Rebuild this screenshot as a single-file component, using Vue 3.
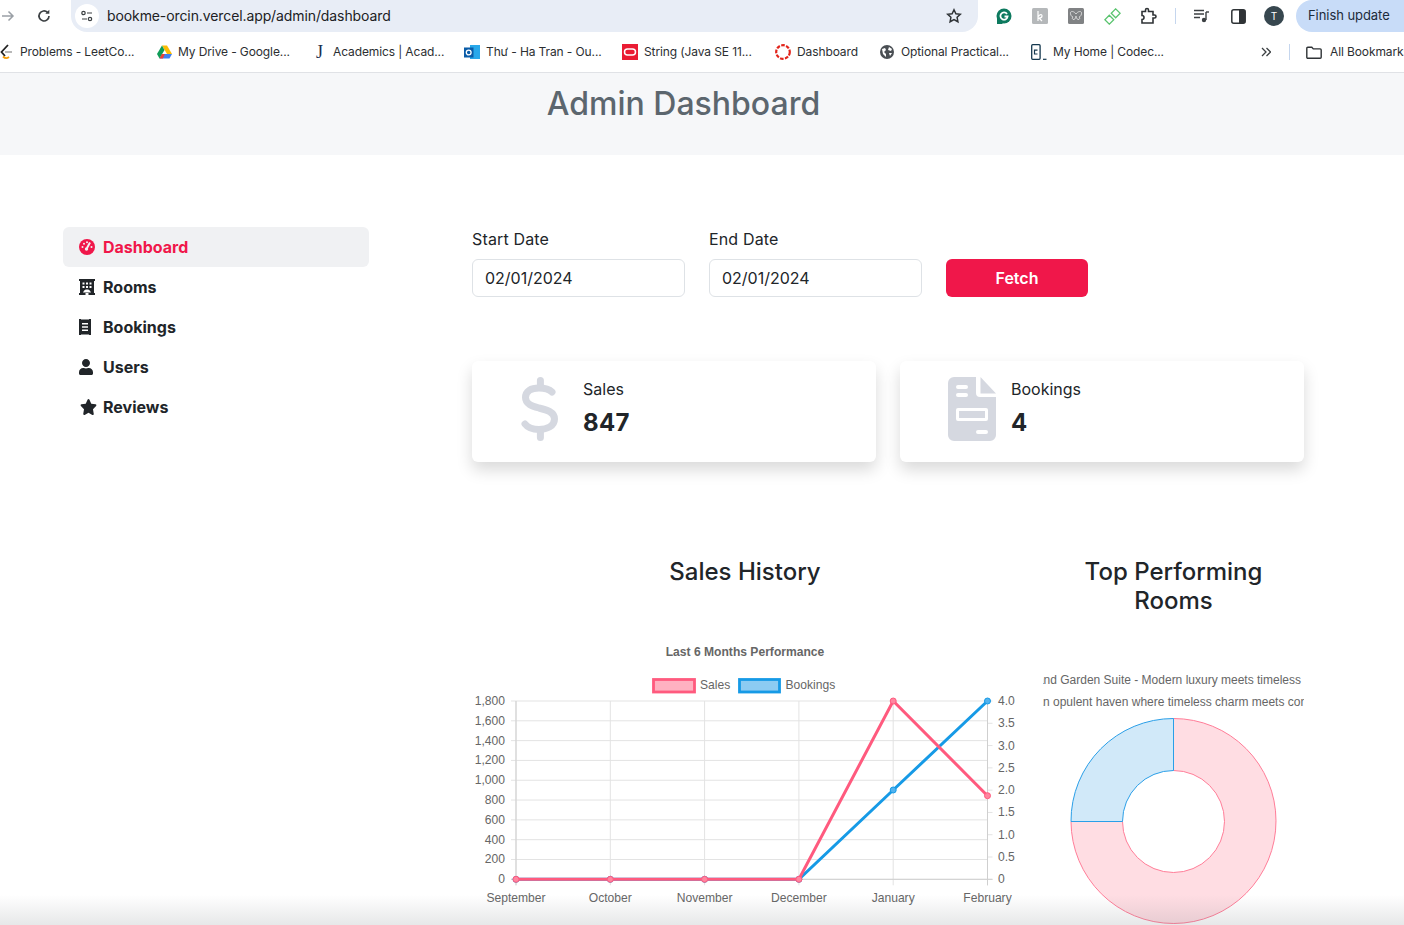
<script setup>
const bookmarks = [
  { k: 'leet', t: 'Problems - LeetCo...', w: 157, iw: 20 },
  { k: 'drive', t: 'My Drive - Google...', w: 158, iw: 21 },
  { k: 'j', t: 'Academics | Acad...', w: 149, iw: 18 },
  { k: 'outlook', t: 'Thư - Ha Tran - Ou...', w: 158, iw: 22 },
  { k: 'oracle', t: 'String (Java SE 11...', w: 153, iw: 22 },
  { k: 'dash', t: 'Dashboard', w: 105, iw: 22 },
  { k: 'globe', t: 'Optional Practical...', w: 151, iw: 21 },
  { k: 'codec', t: 'My Home | Codec...', w: 229, iw: 22 }
]
const nav = [
  { k: 'gauge', t: 'Dashboard', active: true },
  { k: 'hotel', t: 'Rooms' },
  { k: 'receipt', t: 'Bookings' },
  { k: 'user', t: 'Users' },
  { k: 'star', t: 'Reviews' }
]
const top = 701, bot = 879.3, left = 516, right = 987.5
const xs = [0, 1, 2, 3, 4, 5].map(i => left + (i * (right - left)) / 5)
const months = ['September', 'October', 'November', 'December', 'January', 'February']
const lTicks = ['1,800', '1,600', '1,400', '1,200', '1,000', '800', '600', '400', '200', '0'].map((t, i) => ({ t, y: top + (i * (bot - top)) / 9 }))
const rTicks = ['4.0', '3.5', '3.0', '2.5', '2.0', '1.5', '1.0', '0.5', '0'].map((t, i) => ({ t, y: top + (i * (bot - top)) / 8 }))
const sales = [bot, bot, bot, bot, top, 795.7]
const bookingsY = [bot, bot, bot, bot, 790, top]
const pts = a => a.map((y, i) => `${xs[i]},${y}`).join(' ')
const dots = a => a.map((y, i) => ({ x: xs[i], y }))
</script>

<template>
  <div class="page">
    <div class="toolbar">
      <svg class="tb-back" width="14" height="14" viewBox="0 0 14 14"><path d="M1 7h11M7.500 2.500 12 7l-4.500 4.500" fill="none" stroke="#9aa0a6" stroke-width="1.500"/></svg>
      <svg class="tb-reload" width="16" height="16" viewBox="0 0 16 16"><path d="M13 8a5 5 0 1 1-1.500-3.600" fill="none" stroke="#3c4043" stroke-width="1.700"/><path d="M13.300 1.800v4h-4z" fill="#3c4043"/></svg>
      <div class="omni">
        <span class="tune">
          <svg width="14" height="14" viewBox="0 0 14 14"><circle cx="3.500" cy="4" r="1.700" fill="none" stroke="#3c4043" stroke-width="1.200"/><path d="M7 4h5M2 10h5" stroke="#3c4043" stroke-width="1.200"/><circle cx="10" cy="10" r="1.700" fill="none" stroke="#3c4043" stroke-width="1.200"/></svg>
        </span>
        <span class="url">bookme-orcin.vercel.app/admin/dashboard</span>
        <svg class="omni-star" width="16" height="16" viewBox="0 0 16 16"><path d="m8 1.800 1.900 4 4.400.5-3.200 3 .8 4.400L8 11.500l-3.900 2.200.8-4.400-3.200-3 4.400-.5z" fill="none" stroke="#2f3336" stroke-width="1.500"/></svg>
      </div>
      <div class="ext-row">
        <span class="ext"><svg width="16" height="16" viewBox="0 0 16 16"><circle cx="8" cy="8" r="7.500" fill="#0d7a5f"/><path d="M1 10v6h6z" fill="#0d7a5f"/><path d="M11 6a3.600 3.600 0 1 0 .6 2.500H8.500" fill="none" stroke="#fff" stroke-width="1.800"/></svg></span>
        <span class="ext"><svg width="16" height="16" viewBox="0 0 16 16"><rect width="16" height="16" rx="1.500" fill="#b5b8ba"/><path d="M6 3v10M6 9c2-3 4-3 4-1s-2 2-3 2l3 3" fill="none" stroke="#fff" stroke-width="1.200"/></svg></span>
        <span class="ext"><svg width="16" height="16" viewBox="0 0 16 16"><rect width="16" height="16" rx="1.500" fill="#808284"/><path d="M8 6C6 3 3 3 2.500 4.500S3.500 9 5 9c-1.500 1-.5 3 1 2.500S8 9 8 8c0 1 .5 3 2 3.500s2.500-1.500 1-2.500c1.500 0 3-3 2.500-4.500S10 3 8 6z" fill="none" stroke="#ddd" stroke-width=".9"/></svg></span>
        <span class="ext"><svg width="17" height="17" viewBox="0 0 16 16"><path d="M11 .8 15.200 5 11 9.200 6.800 5zM5 6.800 9.200 11 5 15.200.8 11z" fill="none" stroke="#5ac46f" stroke-width="1.200"/></svg></span>
        <span class="ext"><svg width="18" height="18" viewBox="0 0 18 18"><path d="M3 4.500h3.500V3a1.500 1.500 0 0 1 3 0v1.500H14V8h1.500a1.500 1.500 0 0 1 0 3H14v5H3v-3.500a2 2 0 0 0 0-4z" fill="none" stroke="#2f3336" stroke-width="1.600"/></svg></span>
        <span class="tb-div"></span>
        <span class="ext"><svg width="16" height="14" viewBox="0 0 16 14"><path d="M0 1.500h10M0 5h10M0 8.500h6" stroke="#3c4043" stroke-width="1.400"/><path d="M12 3v8" stroke="#3c4043" stroke-width="1.400"/><circle cx="10" cy="11" r="2.200" fill="#3c4043"/><path d="M12 3h3" stroke="#3c4043" stroke-width="1.400"/></svg></span>
        <span class="ext"><svg width="15" height="15" viewBox="0 0 15 15"><rect x=".8" y=".8" width="13.400" height="13.400" rx="2" fill="none" stroke="#2f3336" stroke-width="1.500"/><rect x="8" y="1" width="6" height="13" fill="#2f3336"/></svg></span>
        <span class="avatar">T</span>
      </div>
      <div class="finish">Finish update</div>
    </div>

    <div class="bookbar">
      <div v-for="b in bookmarks" :key="b.k" class="bm" :style="{ width: b.w + 'px' }">
        <span class="bm-ico" :style="{ width: b.iw + 'px' }">
          <svg v-if="b.k === 'leet'" width="14" height="16" viewBox="0 0 14 16"><path d="M8 1 1.500 8l3.500 4" fill="none" stroke="#222" stroke-width="1.800"/><path d="M3 12.500c2 2 4 2 6 .5" fill="none" stroke="#f59e0b" stroke-width="1.800"/><path d="M5 8h7" stroke="#9a9a9a" stroke-width="1.400"/></svg>
          <svg v-else-if="b.k === 'drive'" width="15" height="14" viewBox="0 0 15 14"><path d="M5 .5h5L15 9h-5z" fill="#fbbc04"/><path d="M4.900 9H15l-2.500 4.500h-10z" fill="#3f80ef"/><path d="M5 .5 7.500 5l-5 8.500L0 9z" fill="#0f9d58"/><path d="M2.500 13.500 4.900 9h3l-2 4.500z" fill="#ea4335"/></svg>
          <span v-else-if="b.k === 'j'" class="j-ico">J</span>
          <svg v-else-if="b.k === 'outlook'" width="16" height="16" viewBox="0 0 16 16"><rect x="6" y="1" width="10" height="14" fill="#28a8ea"/><rect x="0" y="3.500" width="9.500" height="10" fill="#0a5ca8"/><circle cx="4.700" cy="8.500" r="2.400" fill="none" stroke="#fff" stroke-width="1.300"/></svg>
          <svg v-else-if="b.k === 'oracle'" width="16" height="16" viewBox="0 0 16 16"><rect width="16" height="16" fill="#ea1b33"/><rect x="2.500" y="5" width="11" height="6" rx="3" fill="none" stroke="#fff" stroke-width="1.500"/></svg>
          <svg v-else-if="b.k === 'dash'" width="16" height="16" viewBox="0 0 16 16"><circle cx="8" cy="8" r="6.800" fill="none" stroke="#e2231a" stroke-width="2.200" stroke-dasharray="3.600 1.400"/></svg>
          <svg v-else-if="b.k === 'globe'" width="14" height="14" viewBox="0 0 14 14"><circle cx="7" cy="7" r="7" fill="#4a4f54"/><path d="M2 4l3-1 1 2-2 2 2 2v3L3 9zM9 2l3 2-1 2-3-1zM9 8h3l-2 3z" fill="#fff"/></svg>
          <svg v-else width="16" height="16" viewBox="0 0 16 16"><rect x=".7" y=".7" width="8.400" height="14.600" rx="1" fill="none" stroke="#15384f" stroke-width="1.300"/><path d="M6.500 6.200H3.500V10h3" fill="none" stroke="#15384f" stroke-width="1.200"/><path d="M12 15.300h3.500" stroke="#15384f" stroke-width="1.200"/></svg>
        </span>
        <span class="bm-t">{{ b.t }}</span>
      </div>
      <svg class="chev" width="10" height="10" viewBox="0 0 10 10"><path d="M1 1l4 4-4 4M5.500 1l4 4-4 4" fill="none" stroke="#3c4043" stroke-width="1.300"/></svg>
      <span class="bm-div"></span>
      <svg class="folder" width="16" height="13" viewBox="0 0 16 13"><path d="M.8 2.200a1 1 0 0 1 1-1h4l1.500 1.700h6.900a1 1 0 0 1 1 1v7.400a1 1 0 0 1-1 1H1.800a1 1 0 0 1-1-1z" fill="none" stroke="#2f3336" stroke-width="1.400"/></svg>
      <span class="bm-t">All Bookmarks</span>
    </div>

    <header class="hero"><h1>Admin Dashboard</h1></header>

    <main class="main">
      <aside class="side">
        <a v-for="n in nav" :key="n.k" class="nav" :class="{ on: n.active }">
          <span class="ni">
            <svg v-if="n.k === 'gauge'" width="16" height="16" viewBox="0 0 16 16"><circle cx="8" cy="8" r="8" fill="currentColor"/><path d="M11 3.500 8 9" stroke="#f0f1f3" stroke-width="2"/><circle cx="7.500" cy="10" r="1.700" fill="#f0f1f3"/><g fill="#f0f1f3"><circle cx="3.500" cy="8" r="1"/><circle cx="5" cy="4.800" r="1"/><circle cx="8" cy="3.200" r="1"/><circle cx="12.500" cy="8" r="1"/></g></svg>
            <svg v-else-if="n.k === 'hotel'" width="16" height="16" viewBox="0 0 16 16"><path fill-rule="evenodd" fill="currentColor" d="M0 0h16v2h-1v12h1v2H9.500v-3h-3v3H0v-2h1V2H0zM3.500 3.500v2h2v-2zm3.500 0v2h2v-2zm3.500 0v2h2v-2zM3.500 7v2h2V7zM7 7v2h2V7zm3.500 0v2h2V7zM4 13.500h8C11 11 9.500 10.500 8 10.500s-3 .5-4 3z"/></svg>
            <svg v-else-if="n.k === 'receipt'" width="12" height="16" viewBox="0 0 12 16"><path fill-rule="evenodd" fill="currentColor" d="M0 0h2l1 1 1-1 1 1 1-1 1 1 1-1 1 1 1-1h2v16h-2l-1-1-1 1-1-1-1 1-1-1-1 1-1-1-1 1H0zM3 4v1.500h6V4zm0 3.300v1.500h6V7.300zm0 3.200V12h6v-1.500z"/></svg>
            <svg v-else-if="n.k === 'user'" width="14" height="16" viewBox="0 0 448 512"><path fill="currentColor" d="M224 256c70.700 0 128-57.300 128-128S294.700 0 224 0 96 57.300 96 128s57.300 128 128 128zm89.600 32h-16.700c-22.200 10.200-46.900 16-72.900 16s-50.600-5.800-72.900-16h-16.700C60.200 288 0 348.200 0 422.400V464c0 26.500 21.500 48 48 48h352c26.500 0 48-21.500 48-48v-41.600c0-74.200-60.200-134.400-134.400-134.400z"/></svg>
            <svg v-else class="star" width="17" height="16" viewBox="0 0 576 512" preserveAspectRatio="none"><path fill="currentColor" d="M259.300 17.800L194 150.200 47.900 171.500c-26.200 3.800-36.700 36.100-17.700 54.600l105.700 103-25 145.500c-4.500 26.300 23.200 46 46.400 33.700L288 439.600l130.700 68.700c23.200 12.200 50.900-7.400 46.400-33.700l-25-145.500 105.700-103c19-18.500 8.500-50.800-17.700-54.600L382 150.200 316.700 17.800c-11.700-23.600-45.600-23.900-57.400 0z"/></svg>
          </span>
          <span>{{ n.t }}</span>
        </a>
      </aside>

      <section class="content">
        <form class="dates">
          <label class="field"><span>Start Date</span><input value="02/01/2024" readonly /></label>
          <label class="field"><span>End Date</span><input value="02/01/2024" readonly /></label>
          <button type="button" class="fetch">Fetch</button>
        </form>

        <div class="cards">
          <div class="card">
            <svg class="card-ico dollar" width="38" height="64" viewBox="0 0 38 64"><path d="M20.400 3.500V9.500M20.400 54.500V60.500" fill="none" stroke="#d5d8e0" stroke-width="7" stroke-linecap="round"/><path d="M32 15C29 12 24 11 19 11 11 11 5.500 14 5.500 20.500 5.500 27 12 29 19 31 27 33 34.500 35 34.500 42 34.500 49 27 52.500 19 52.500 13 52.500 8 51 5 47" fill="none" stroke="#d5d8e0" stroke-width="7" stroke-linecap="round"/></svg>
            <div><div class="c-label">Sales</div><div class="c-val">847</div></div>
          </div>
          <div class="card">
            <svg class="card-ico" width="48" height="64" viewBox="0 0 48 64"><path fill-rule="evenodd" fill="#d5d8e0" d="M6 0h22v16a4 4 0 0 0 4 4h16v38a6 6 0 0 1-6 6H6a6 6 0 0 1-6-6V6a6 6 0 0 1 6-6zM10 8a2 2 0 0 0 0 4h8a2 2 0 0 0 0-4zm0 8a2 2 0 0 0 0 4h8a2 2 0 0 0 0-4zm-0 15a2 2 0 0 0-2 2v9a2 2 0 0 0 2 2h28a2 2 0 0 0 2-2v-9a2 2 0 0 0-2-2zm1 3h26v7H11zm19 19a2 2 0 0 0 0 4h8a2 2 0 0 0 0-4z"/><path fill="#d5d8e0" d="M32.500 0 48 16.500H32.500z"/></svg>
            <div><div class="c-label">Bookings</div><div class="c-val">4</div></div>
          </div>
        </div>

        <div class="charts">
          <div class="col-line">
            <h2>Sales History</h2>
            <svg class="line-svg" width="546" height="279" viewBox="472 646 546 279">
              <text x="745" y="655.500" class="ct-title" text-anchor="middle">Last 6 Months Performance</text>
              <rect x="653.500" y="679.500" width="41" height="12.500" fill="#ffb1c1" stroke="#ff5a7e" stroke-width="2.800"/>
              <text x="700" y="689" class="ct">Sales</text>
              <rect x="739.500" y="679.500" width="40" height="12.500" fill="#8ccbf2" stroke="#169ae6" stroke-width="2.800"/>
              <text x="785.500" y="689" class="ct">Bookings</text>
              <g stroke="#e3e3e3" stroke-width="1">
                <line v-for="t in lTicks" :key="t.t" :x1="left - 5" :x2="right" :y1="t.y" :y2="t.y"/>
                <line v-for="x in xs" :key="x" :x1="x" :x2="x" :y1="top" :y2="bot + 6"/>
                <line v-for="t in rTicks" :key="'r' + t.t" :x1="right" :x2="right + 5" :y1="t.y" :y2="t.y"/>
              </g>
              <line :x1="left" :x2="left" :y1="top" :y2="bot + 6" stroke="#cfcfcf"/>
              <line :x1="right" :x2="right" :y1="top" :y2="bot + 6" stroke="#cfcfcf"/>
              <line :x1="left - 5" :x2="right + 5" :y1="bot" :y2="bot" stroke="#cfcfcf"/>
              <text v-for="t in lTicks" :key="'l' + t.t" :x="505" :y="t.y + 4" class="ct" text-anchor="end">{{ t.t }}</text>
              <text v-for="t in rTicks" :key="'rt' + t.t" :x="998" :y="t.y + 4" class="ct">{{ t.t }}</text>
              <text v-for="(m, i) in months" :key="m" :x="xs[i]" y="902" class="ct" text-anchor="middle">{{ m }}</text>
              <polyline :points="pts(bookingsY)" fill="none" stroke="#169ae6" stroke-width="3"/>
              <circle v-for="(d, i) in dots(bookingsY)" :key="'b' + i" :cx="d.x" :cy="d.y" r="3" fill="#52b3ef" stroke="#169ae6"/>
              <polyline :points="pts(sales)" fill="none" stroke="#ff5a7e" stroke-width="3"/>
              <circle v-for="(d, i) in dots(sales)" :key="'s' + i" :cx="d.x" :cy="d.y" r="3" fill="#ff86a0" stroke="#ff5a7e"/>
            </svg>
          </div>
          <div class="col-donut">
            <h2>Top Performing Rooms</h2>
            <div class="leg leg-a"><span>Grand Garden Suite - Modern luxury meets timeless</span></div>
            <div class="leg leg-b"><span>An opulent haven where timeless charm meets contemporary</span></div>
            <svg class="donut" width="261" height="208" viewBox="1043 717 261 208">
              <path d="M1173.500 718.500A102.500 102.500 0 1 1 1071 821.500H1122.500A51 51 0 1 0 1173.500 770.500Z" fill="#ffdde3" stroke="#ff7d98" stroke-width="1"/>
              <path d="M1071 821.500A102.500 102.500 0 0 1 1173.500 718.500V770.500A51 51 0 0 0 1122.500 821.500Z" fill="#d1e9f9" stroke="#2a9fe8" stroke-width="1"/>
            </svg>
          </div>
        </div>
      </section>
    </main>
    <div class="fade"></div>
  </div>
</template>

<style>
html, body { margin: 0; background: #fff; overflow: hidden; }
</style>

<style scoped>
.page { position: relative; width: 1404px; height: 925px; overflow: hidden; font-family: Inter, "Liberation Sans", sans-serif; color: #212529; background: #fff; }
.toolbar { display: flex; align-items: center; height: 32px; white-space: nowrap; }
.tb-back { margin-left: 1px; flex: none; }
.tb-reload { margin-left: 21px; flex: none; }
.omni { display: flex; align-items: center; width: 907px; height: 32px; margin-left: 19px; border-radius: 0 0 16px 16px; background: #e8edf6; flex: none; }
.tune { display: flex; align-items: center; justify-content: center; width: 24px; height: 24px; margin-left: 4px; border-radius: 50%; background: #fff; }
.url { margin: 0 0 2px 8px; font-size: 14px; letter-spacing: -.1px; color: #202124; }
.omni-star { margin-left: auto; margin-right: 16px; }
.ext-row { display: flex; align-items: center; margin-left: 8px; flex: none; }
.ext { display: flex; align-items: center; justify-content: center; width: 36px; height: 32px; }
.tb-div { width: 1px; height: 16px; margin: 0 8px 0 9px; background: #c5d6ee; }
.avatar { display: flex; align-items: center; justify-content: center; width: 20px; height: 20px; margin-left: 8px; border-radius: 50%; background: #37474f; color: #fff; font-size: 10px; }
.finish { display: flex; align-items: center; height: 30px; width: 130px; margin-left: 12px; padding: 0 0 2px 12px; border-radius: 16px 0 0 16px; background: #c8dcf8; font-size: 13px; letter-spacing: -.06px; color: #1c2b3a; flex: none; }
.bookbar { display: flex; align-items: center; height: 40px; border-bottom: 1px solid #e0e2e6; box-sizing: content-box; white-space: nowrap; background: #fff; }
.bm { display: flex; align-items: center; flex: none; }
.bm-ico { display: flex; align-items: center; flex: none; }
.bm-t { margin-bottom: 2px; font-size: 12px; letter-spacing: -.11px; color: #2b2e31; }
.j-ico { margin-left: 1px; font-family: "Liberation Serif", serif; font-size: 18px; color: #1c2f4f; }
.chev { margin: 0 18px 0 1px; flex: none; }
.bm-div { width: 1px; height: 16px; margin-right: 16px; background: #c5d6ee; flex: none; }
.folder { margin-right: 8px; flex: none; }
.hero { height: 82px; background: #f6f7f9; }
h1 { margin: 0; padding: 12px 37px 0 0; text-align: center; font-size: 32px; line-height: 38px; font-weight: 500; color: #5c666e; }
.main { display: flex; padding: 72px 100px 0 63px; }
.side { display: flex; flex-direction: column; width: 306px; flex: none; }
.nav { display: flex; align-items: center; height: 40px; padding-left: 16px; border-radius: 6px; font-size: 16px; font-weight: 700; color: #212529; }
.nav.on { background: #f0f1f3; color: #f0174a; }
.ni { display: flex; align-items: center; width: 24px; flex: none; }
.star { margin-left: .5px; }
.content { width: 832px; margin-left: 103px; }
.dates { display: flex; align-items: flex-end; gap: 24px; }
.field { display: flex; flex-direction: column; gap: 8px; width: 213px; font-size: 16px; line-height: 24px; }
.field span { letter-spacing: .15px; }
.field input { box-sizing: border-box; width: 100%; height: 38px; padding: 0 12px; border: 1px solid #dee2e6; border-radius: 6px; font: 16px Inter, sans-serif; color: #212529; outline: none; }
.fetch { width: 142px; height: 38px; border: 0; border-radius: 6px; background: #f0174a; color: #fff; font: 600 16px Inter, sans-serif; }
.cards { display: flex; gap: 24px; margin-top: 64px; }
.card { display: flex; align-items: flex-start; width: 404px; height: 101px; padding-top: 16px; box-sizing: border-box; border-radius: 6px; background: #fff; box-shadow: 0 8px 16px rgba(0, 0, 0, .15); }
.card-ico { margin-left: 48px; margin-right: 15px; flex: none; }
.dollar { margin-right: 25px; }
.c-label { font-size: 16px; line-height: 24px; }
.c-val { margin-top: 6px; font-size: 24px; line-height: 32px; font-weight: 700; letter-spacing: .3px; }
.charts { display: flex; justify-content: space-between; margin-top: 95px; }
.col-line { width: 546px; }
.col-donut { width: 261px; }
h2 { margin: 0; text-align: center; font-size: 24px; line-height: 29px; font-weight: 500; color: #212529; }
.line-svg { display: block; margin-top: 60px; }
.ct { font: 12.1px "Liberation Sans", sans-serif; fill: #666; }
.ct-title { font: 700 12.1px "Liberation Sans", sans-serif; fill: #666; }
.leg { display: flex; height: 22px; overflow: hidden; white-space: nowrap; font: 12px/22px "Liberation Sans", sans-serif; color: #666; }
.leg span { flex: none; }
.leg-a { justify-content: flex-end; padding-right: 3px; margin-top: 54px; }
.leg-b { justify-content: flex-start; }
.leg-b span { margin-left: -8px; }
.donut { display: block; margin-top: 4px; }
.fade { position: absolute; left: 0; right: 0; bottom: 0; height: 30px; background: linear-gradient(rgba(120, 125, 130, 0), rgba(120, 125, 130, .18)); pointer-events: none; }
</style>
